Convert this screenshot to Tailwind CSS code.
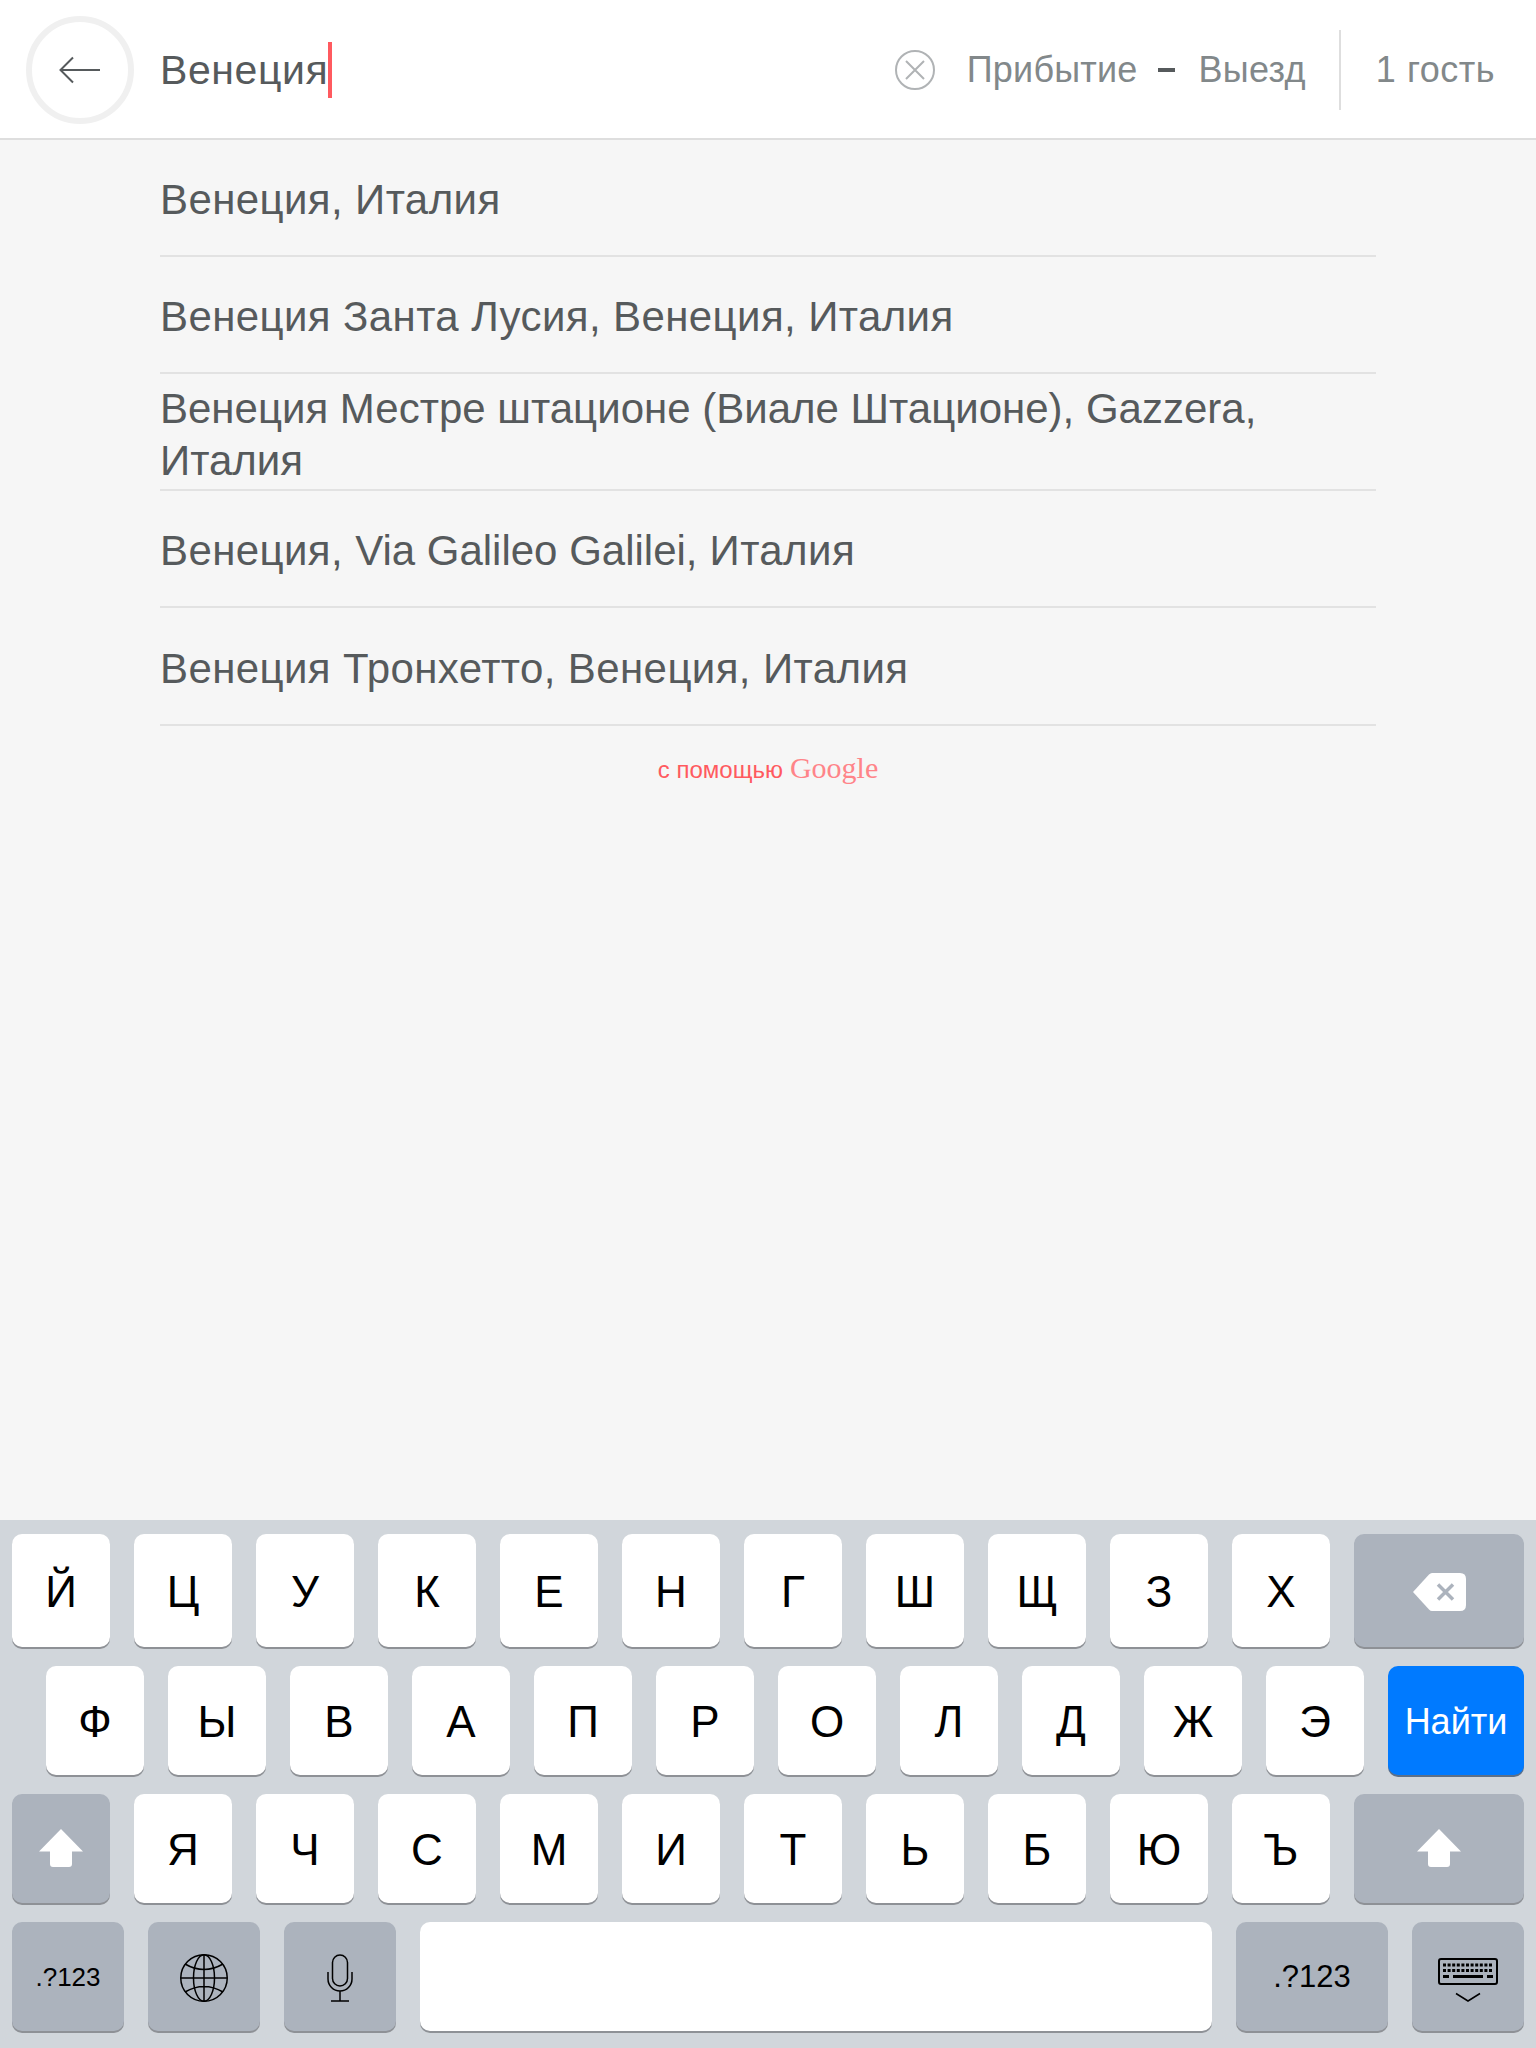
<!DOCTYPE html>
<html lang="ru">
<head>
<meta charset="utf-8">
<script src="https://cdn.jsdelivr.net/npm/@tailwindcss/browser@4"></script>
<title>Поиск</title>
</head>
<body class="font-['Liberation_Sans',Arial,sans-serif]">
<div class="w-[1536px] h-[2048px] flex flex-col bg-[#f6f6f6] overflow-hidden">
  <header class="h-[140px] shrink-0 bg-white border-b-2 border-[#dedede] flex items-center pl-[26px] pt-0.5 text-[#82888a]">
    <div class="w-[108px] h-[108px] rounded-full border-[6px] border-[#f0f0f0] flex items-center justify-center shrink-0">
      <svg width="42" height="28" viewBox="0 0 42 28" fill="none" stroke="#565a5c" stroke-width="2"><path d="M41 14H2M14 1.500 1.500 14 14 26.500"/></svg>
    </div>
    <div class="ml-[26px] flex items-center text-[41px] tracking-[0.6px] text-[#565a5c] leading-none">Венеция<span class="w-1 h-14 bg-[#ff5a5f]"></span></div>
    <div class="ml-auto flex items-center">
      <svg width="40" height="40" viewBox="0 0 40 40" fill="none" stroke="#b0b3b5" stroke-width="2"><circle cx="20" cy="20" r="19"/><path d="M11 11 29 29M29 11 11 29"/></svg>
      <span class="ml-8 text-[36px] tracking-[0.2px] leading-none">Прибытие</span>
      <span class="ml-5 w-[17px] h-1 bg-[#565a5c]"></span>
      <span class="ml-6 text-[36px] tracking-[0.3px] leading-none">Выезд</span>
      <span class="ml-[33px] w-0.5 h-20 bg-[#dedede]"></span>
      <span class="ml-[35px] mr-[41px] text-[36px] tracking-[0.5px] leading-none">1 гость</span>
    </div>
  </header>
  <main class="flex-1 pl-[160px] pr-[160px] text-[42px] tracking-[0.4px] leading-[52px] text-[#565a5c]">
    <div class="h-[117px] pt-[5px] border-b-2 border-[#e2e2e2] flex items-center">Венеция, Италия</div>
    <div class="h-[117px] pt-[5px] border-b-2 border-[#e2e2e2] flex items-center">Венеция Занта Лусия, Венеция, Италия</div>
    <div class="h-[117px] pt-[7px] border-b-2 border-[#e2e2e2] flex items-center tracking-normal">Венеция Местре штационе (Виале Штационе), Gazzera, Италия</div>
    <div class="h-[117px] pt-[5px] border-b-2 border-[#e2e2e2] flex items-center"><p>Венеция, <span class="tracking-normal">Via Galileo Galilei,</span> Италия</p></div>
    <div class="h-[118px] pt-[5px] border-b-2 border-[#e2e2e2] flex items-center">Венеция Тронхетто, Венеция, Италия</div>
    <div class="mt-[20px] flex items-baseline justify-center tracking-normal text-[#ff5a5f] text-[24px] leading-[44px]">с помощью<span class="ml-[7px] text-[30px] text-[#ff8489] font-['Liberation_Serif',serif]">Google</span></div>
  </main>
  <section class="h-[528px] shrink-0 bg-[#d1d6db] pt-[14px] pl-3 flex flex-col gap-[19px] text-[44px] text-black [&>div>div]:pt-0.5">
    <div class="flex gap-6 h-[113px]">
      <div class="w-[98px] rounded-[10px] bg-white shadow-[0_2px_0_#8e9196] flex items-center justify-center">Й</div>
      <div class="w-[98px] rounded-[10px] bg-white shadow-[0_2px_0_#8e9196] flex items-center justify-center">Ц</div>
      <div class="w-[98px] rounded-[10px] bg-white shadow-[0_2px_0_#8e9196] flex items-center justify-center">У</div>
      <div class="w-[98px] rounded-[10px] bg-white shadow-[0_2px_0_#8e9196] flex items-center justify-center">К</div>
      <div class="w-[98px] rounded-[10px] bg-white shadow-[0_2px_0_#8e9196] flex items-center justify-center">Е</div>
      <div class="w-[98px] rounded-[10px] bg-white shadow-[0_2px_0_#8e9196] flex items-center justify-center">Н</div>
      <div class="w-[98px] rounded-[10px] bg-white shadow-[0_2px_0_#8e9196] flex items-center justify-center">Г</div>
      <div class="w-[98px] rounded-[10px] bg-white shadow-[0_2px_0_#8e9196] flex items-center justify-center">Ш</div>
      <div class="w-[98px] rounded-[10px] bg-white shadow-[0_2px_0_#8e9196] flex items-center justify-center">Щ</div>
      <div class="w-[98px] rounded-[10px] bg-white shadow-[0_2px_0_#8e9196] flex items-center justify-center">З</div>
      <div class="w-[98px] rounded-[10px] bg-white shadow-[0_2px_0_#8e9196] flex items-center justify-center">Х</div>
      <div class="w-[170px] rounded-[10px] bg-[#acb3bd] shadow-[0_2px_0_#8e9196] flex items-center justify-center">
        <svg width="54" height="38" viewBox="0 0 54 38"><path d="M1 19 17 1.500Q18.500 0 20 0H48Q54 0 54 6V32Q54 38 48 38H20Q18.500 38 17 36.500Z" fill="#fff"/><path d="M26 11.500 41 26.500M41 11.500 26 26.500" fill="none" stroke="#acb3bd" stroke-width="3.500"/></svg>
      </div>
    </div>
    <div class="flex gap-6 h-[109px] pl-[34px]">
      <div class="w-[98px] rounded-[10px] bg-white shadow-[0_2px_0_#8e9196] flex items-center justify-center">Ф</div>
      <div class="w-[98px] rounded-[10px] bg-white shadow-[0_2px_0_#8e9196] flex items-center justify-center">Ы</div>
      <div class="w-[98px] rounded-[10px] bg-white shadow-[0_2px_0_#8e9196] flex items-center justify-center">В</div>
      <div class="w-[98px] rounded-[10px] bg-white shadow-[0_2px_0_#8e9196] flex items-center justify-center">А</div>
      <div class="w-[98px] rounded-[10px] bg-white shadow-[0_2px_0_#8e9196] flex items-center justify-center">П</div>
      <div class="w-[98px] rounded-[10px] bg-white shadow-[0_2px_0_#8e9196] flex items-center justify-center">Р</div>
      <div class="w-[98px] rounded-[10px] bg-white shadow-[0_2px_0_#8e9196] flex items-center justify-center">О</div>
      <div class="w-[98px] rounded-[10px] bg-white shadow-[0_2px_0_#8e9196] flex items-center justify-center">Л</div>
      <div class="w-[98px] rounded-[10px] bg-white shadow-[0_2px_0_#8e9196] flex items-center justify-center">Д</div>
      <div class="w-[98px] rounded-[10px] bg-white shadow-[0_2px_0_#8e9196] flex items-center justify-center">Ж</div>
      <div class="w-[98px] rounded-[10px] bg-white shadow-[0_2px_0_#8e9196] flex items-center justify-center">Э</div>
      <div class="w-[136px] rounded-[10px] bg-[#007aff] shadow-[0_2px_0_#5b6f88] flex items-center justify-center text-[36px] text-white">Найти</div>
    </div>
    <div class="flex gap-6 h-[109px]">
      <div class="w-[98px] rounded-[10px] bg-[#acb3bd] shadow-[0_2px_0_#8e9196] flex items-center justify-center pb-1">
        <svg width="44" height="38" viewBox="0 0 44 38" fill="#fff"><path d="M22 0 44 22.500H33V35Q33 38 30 38H14Q11 38 11 35V22.500H0Z"/></svg>
      </div>
      <div class="w-[98px] rounded-[10px] bg-white shadow-[0_2px_0_#8e9196] flex items-center justify-center">Я</div>
      <div class="w-[98px] rounded-[10px] bg-white shadow-[0_2px_0_#8e9196] flex items-center justify-center">Ч</div>
      <div class="w-[98px] rounded-[10px] bg-white shadow-[0_2px_0_#8e9196] flex items-center justify-center">С</div>
      <div class="w-[98px] rounded-[10px] bg-white shadow-[0_2px_0_#8e9196] flex items-center justify-center">М</div>
      <div class="w-[98px] rounded-[10px] bg-white shadow-[0_2px_0_#8e9196] flex items-center justify-center">И</div>
      <div class="w-[98px] rounded-[10px] bg-white shadow-[0_2px_0_#8e9196] flex items-center justify-center">Т</div>
      <div class="w-[98px] rounded-[10px] bg-white shadow-[0_2px_0_#8e9196] flex items-center justify-center">Ь</div>
      <div class="w-[98px] rounded-[10px] bg-white shadow-[0_2px_0_#8e9196] flex items-center justify-center">Б</div>
      <div class="w-[98px] rounded-[10px] bg-white shadow-[0_2px_0_#8e9196] flex items-center justify-center">Ю</div>
      <div class="w-[98px] rounded-[10px] bg-white shadow-[0_2px_0_#8e9196] flex items-center justify-center">Ъ</div>
      <div class="w-[170px] rounded-[10px] bg-[#acb3bd] shadow-[0_2px_0_#8e9196] flex items-center justify-center pb-1">
        <svg width="44" height="38" viewBox="0 0 44 38" fill="#fff"><path d="M22 0 44 22.500H33V35Q33 38 30 38H14Q11 38 11 35V22.500H0Z"/></svg>
      </div>
    </div>
    <div class="flex gap-6 h-[109px]">
      <div class="w-[112px] rounded-[10px] bg-[#acb3bd] shadow-[0_2px_0_#8e9196] flex items-center justify-center text-[26px]">.?123</div>
      <div class="w-[112px] rounded-[10px] bg-[#acb3bd] shadow-[0_2px_0_#8e9196] flex items-center justify-center">
        <svg width="50" height="48" viewBox="0 0 50 48" fill="none" stroke="#000" stroke-width="1.500"><circle cx="25" cy="24" r="23.250"/><ellipse cx="25" cy="24" rx="10.500" ry="23.250"/><path d="M25 1V47M2 24H48M6 10Q25 21 44 10M6 38Q25 27 44 38"/></svg>
      </div>
      <div class="w-[112px] rounded-[10px] bg-[#acb3bd] shadow-[0_2px_0_#8e9196] flex items-center justify-center">
        <svg width="26" height="48" viewBox="0 0 26 48" fill="none" stroke="#000" stroke-width="1.500"><rect x="5.500" y="1" width="15" height="31" rx="7.500"/><path d="M1 18V25A12 12 0 0 0 25 25V18M13 37V47M4 47H22"/></svg>
      </div>
      <div class="w-[792px] rounded-[10px] bg-white shadow-[0_2px_0_#8e9196]"></div>
      <div class="w-[152px] rounded-[10px] bg-[#acb3bd] shadow-[0_2px_0_#8e9196] flex items-center justify-center text-[31px]">.?123</div>
      <div class="w-[112px] rounded-[10px] bg-[#acb3bd] shadow-[0_2px_0_#8e9196] flex items-center justify-center">
        <svg class="mt-1" width="60" height="44" viewBox="0 0 60 44" fill="none" stroke="#000"><rect x="1" y="1" width="58" height="25" rx="2" stroke-width="2"/><path d="M5 7H55M5 12.500H55" stroke-width="3" stroke-dasharray="3 1.600"/><path d="M5 18.500H11M15 18.500H45M49 18.500H55" stroke-width="3"/><path d="M18 35.500 30 43 42 35.500" stroke-width="1.500"/></svg>
      </div>
    </div>
  </section>
</div>
</body>
</html>
